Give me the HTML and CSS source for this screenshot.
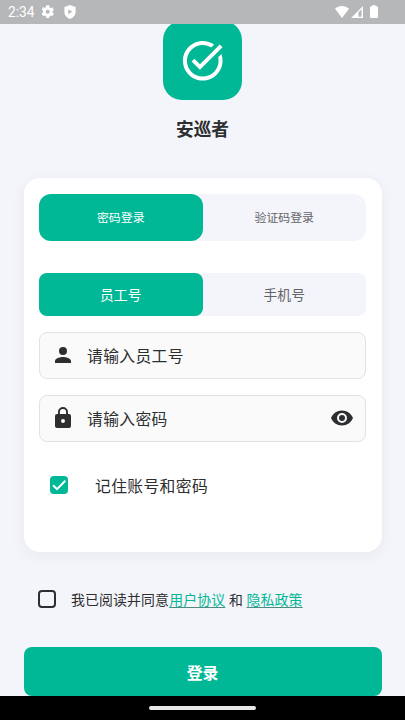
FILE: index.html
```html
<!DOCTYPE html>
<html lang="zh-CN">
<head>
<meta charset="utf-8">
<title>安巡者</title>
<link rel="stylesheet" href="styles.css">
</head>
<body>
<header class="status">
  <span class="time">2:34</span>
  <svg class="gear" viewBox="1.5 1.5 21 21"><path d="M19.14 12.94c.04-.3.06-.61.06-.94s-.02-.64-.07-.94l2.03-1.58a.49.49 0 0 0 .12-.61l-1.92-3.32a.49.49 0 0 0-.59-.22l-2.39.96a7 7 0 0 0-1.62-.94l-.36-2.54A.48.48 0 0 0 13.92 2h-3.84a.48.48 0 0 0-.48.41l-.36 2.54a7 7 0 0 0-1.62.94l-2.39-.96a.49.49 0 0 0-.59.22L2.72 8.47a.48.48 0 0 0 .12.61l2.03 1.58a7.400 7.400 0 0 0 0 2.280l-2.030 1.580a.49.49 0 0 0-.12.61l1.920 3.320c.12.22.37.29.59.22l2.390-.96c.5.38 1.030.7 1.620.94l.36 2.540c.05.24.24.41.48.41h3.840c.24 0 .44-.17.47-.41l.36-2.540a7 7 0 0 0 1.620-.94l2.390.96c.22.08.47 0 .59-.22l1.920-3.320a.48.48 0 0 0-.12-.61zM12 15.200a3.200 3.200 0 1 1 0-6.400 3.200 3.200 0 0 1 0 6.400z"/></svg>
  <svg class="shield" viewBox="0 0 12 14"><path fill-rule="evenodd" d="M6 0l5.6 2v5c0 3.2-2.3 5.8-5.6 7C2.7 12.800.4 10.200.4 7V2zM4.300 4.300v4.900L8.200 6.700z"/></svg>
  <svg class="wifi" viewBox="0 0 14 12"><path d="M0 2.800C4-.8 10-.8 14 2.800L7 12z"/></svg>
  <svg class="signal" viewBox="0 0 12 12"><path fill-rule="evenodd" d="M12 0v12H0zM7.500 6.300v4.500h3V3.300z"/></svg>
  <svg class="battery" viewBox="0 0 8 13"><path d="M2.500 0h3v1.300H7q1 0 1 1V12q0 1-1 1H1q-1 0-1-1V2.300q0-1 1-1h1.500z"/></svg>
</header>
<main class="page">
  <div class="logo">
    <svg viewBox="0 0 24 24"><path d="M22 5.180L10.590 16.600l-4.240-4.240 1.410-1.410 2.830 2.830 10-10zM19.790 10.220c.13.570.21 1.170.21 1.780 0 4.420-3.580 8-8 8s-8-3.580-8-8 3.580-8 8-8c1.580 0 3.040.46 4.280 1.250l1.440-1.440A9.900 9.900 0 0 0 12 2C6.480 2 2 6.480 2 12s4.480 10 10 10 10-4.480 10-10c0-1.190-.22-2.330-.6-3.390z"/></svg>
  </div>
  <h1 class="title">安巡者</h1>
  <section class="card">
    <div class="tabs"><div class="tab active">密码登录</div><div class="tab">验证码登录</div></div>
    <div class="tabs small"><div class="tab active">员工号</div><div class="tab">手机号</div></div>
    <div class="field">
      <svg viewBox="0 0 24 24"><path d="M12 12a4 4 0 1 0 0-8 4 4 0 0 0 0 8zm0 2c-2.670 0-8 1.340-8 4v2h16v-2c0-2.660-5.330-4-8-4z"/></svg>
      <span>请输入员工号</span>
    </div>
    <div class="field">
      <svg viewBox="0 0 24 24"><path d="M18 8h-1V6A5 5 0 0 0 7 6v2H6a2 2 0 0 0-2 2v10c0 1.100.9 2 2 2h12a2 2 0 0 0 2-2V10a2 2 0 0 0-2-2zm-6 9a2 2 0 1 1 0-4 2 2 0 0 1 0 4zm3.100-9H8.900V6a3.100 3.100 0 0 1 6.200 0z"/></svg>
      <span>请输入密码</span>
      <svg class="eye" viewBox="0 0 24 24"><path d="M12 4.500C7 4.500 2.730 7.610 1 12c1.730 4.390 6 7.500 11 7.500s9.270-3.110 11-7.500c-1.730-4.390-6-7.500-11-7.500zM12 17a5 5 0 1 1 0-10 5 5 0 0 1 0 10zm0-8a3 3 0 1 0 0 6 3 3 0 0 0 0-6z"/></svg>
    </div>
    <div class="remember">
      <span class="box checked"><svg viewBox="0 0 18 18"><path d="M3 9.200l4 4 8.300-8.500"/></svg></span>
      <span>记住账号和密码</span>
    </div>
  </section>
  <div class="agree">
    <span class="box"></span>
    <p>我已阅读并同意<a>用户协议</a> 和 <a>隐私政策</a></p>
  </div>
  <div class="submit">登录</div>
</main>
<footer class="nav"><span></span></footer>
</body>
</html>
```
FILE: styles.css
```css
* { box-sizing: border-box; }
body {
  margin: 0;
  width: 405px;
  height: 720px;
  overflow: hidden;
  display: flex;
  flex-direction: column;
  background: #f4f5fa;
  color: #2d2e30;
  font-family: "Noto Sans CJK SC", sans-serif;
}
svg { display: block; flex: none; fill: currentColor; }
.status {
  position: relative;
  z-index: 1;
  flex: none;
  height: 23.5px;
  padding: 0 27.5px 0 8px;
  display: flex;
  align-items: center;
  background: #b6b7b9;
  color: #fff;
}
.time { width: 33px; padding-top: 1px; font: 13.8px/20px Roboto, sans-serif; }
.gear { width: 13.5px; height: 13.5px; }
.shield { width: 12px; height: 14px; margin-left: 9px; }
.wifi { width: 14px; height: 12px; margin-left: auto; }
.signal { width: 12px; height: 12px; margin-left: 2px; }
.battery { width: 8px; height: 13px; margin-left: 7px; }
.page {
  flex: 1;
  min-height: 0;
  padding: 0 23.5px;
  display: flex;
  flex-direction: column;
}
.logo {
  width: 79px;
  height: 79px;
  margin: -2.5px auto 0;
  flex: none;
  display: flex;
  align-items: center;
  justify-content: center;
  border-radius: 19px;
  background: #00b796;
  color: #fff;
}
.logo svg { width: 47.5px; height: 47.5px; }
.title {
  margin: 15px 0 0;
  font-size: 17.7px;
  line-height: 26px;
  font-weight: 700;
  text-align: center;
}
.card {
  flex: none;
  height: 374px;
  margin-top: 37px;
  padding: 15.5px 15.5px 0;
  border-radius: 16px;
  background: #fff;
  box-shadow: 0 4px 16px rgba(30, 40, 70, .055);
}
.tabs {
  height: 47.5px;
  display: flex;
  border-radius: 12px;
  background: #f4f5fa;
  color: #626467;
  font-size: 11.9px;
}
.tab { flex: 1; display: flex; align-items: center; justify-content: center; padding-bottom: 1px; border-radius: 12px; }
.active { background: #00b796; color: #fff; }
.tabs.small { height: 43.5px; margin-top: 31.5px; border-radius: 8px; font-size: 13.8px; }
.small .tab { padding-bottom: 0; border-radius: 8px; }
.field {
  height: 47.5px;
  margin-top: 15.5px;
  padding: 0 11px;
  display: flex;
  align-items: center;
  gap: 12px;
  border: 1px solid #e1e2e3;
  border-radius: 8px;
  background: #fafafa;
  font-size: 15.8px;
  letter-spacing: .35px;
}
.field svg { width: 24px; height: 24px; }
.field .eye { margin-left: auto; }
.remember {
  display: flex;
  align-items: center;
  height: 24px;
  margin-top: 31px;
  padding-left: 11px;
  gap: 27px;
  font-size: 15.8px;
  line-height: 22px;
  letter-spacing: .35px;
}
.remember span:last-child { padding-top: 1px; }
.box { width: 18px; height: 18px; flex: none; border: 2px solid #2d2e30; border-radius: 4px; }
.checked { border: 0; background: #00b796; }
.checked path { fill: none; stroke: #fff; stroke-width: 2; }
.agree {
  flex: none;
  height: 24px;
  margin-top: 35px;
  padding-left: 14.5px;
  display: flex;
  align-items: center;
  gap: 15px;
  font-size: 13.9px;
  letter-spacing: .13px;
  word-spacing: .4px;
}
.agree p { margin: 0; line-height: 20px; white-space: nowrap; }
.agree a { color: #00b796; text-decoration: underline #4f8c80 1px; text-underline-offset: 2px; }
.submit {
  flex: none;
  height: 49px;
  margin-top: 35.5px;
  padding-top: 2.5px;
  display: flex;
  align-items: center;
  justify-content: center;
  border-radius: 8px;
  background: #00b796;
  color: #fff;
  font-size: 15.8px;
  font-weight: 700;
}
.nav {
  flex: none;
  height: 24px;
  display: flex;
  align-items: center;
  justify-content: center;
  background: #000;
}
.nav span { width: 107px; height: 4px; border-radius: 2px; background: #e8e8e8; }
```
